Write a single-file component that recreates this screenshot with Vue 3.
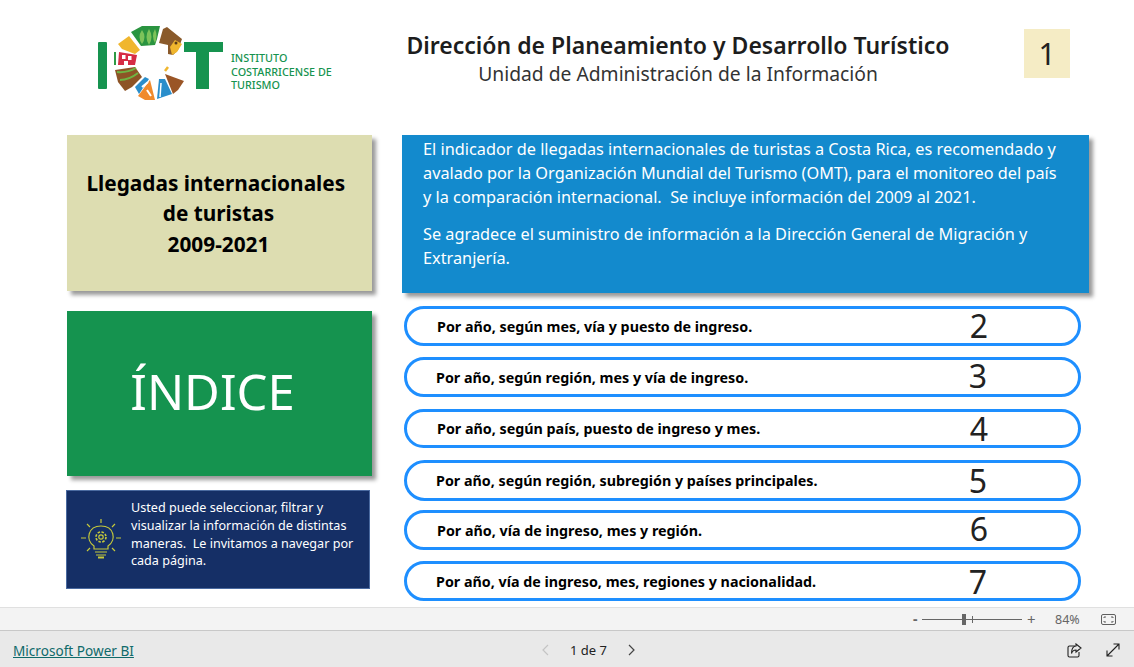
<script setup>
const links = [
  { text: 'Por año, según mes, vía y puesto de ingreso.', page: 2 },
  { text: 'Por año, según región, mes y vía de ingreso.', page: 3 },
  { text: 'Por año, según país, puesto de ingreso y mes.', page: 4 },
  { text: 'Por año, según región, subregión y países principales.', page: 5 },
  { text: 'Por año, vía de ingreso, mes y región.', page: 6 },
  { text: 'Por año, vía de ingreso, mes, regiones y nacionalidad.', page: 7 },
]

// pieces of the logo ring
const shapes = [
  { points: '33,7 44,1 62,1 59,14 57,20 43,21', fill: '#2a9440' },
  { points: '65,4 69,2 84,14 80,25 75,30 70,29 70,20 61,18', fill: '#8a5a2b' },
  { points: '72,22 77,15 84,19 79,27 74,30', fill: '#f0b62e' },
  { points: '20,19 31,11 42,25 37,29 24,24', fill: '#f0b62e' },
  { points: '21,27 39,30 37,40 20,40', fill: '#d62c45' },
  { points: '17,45 37,42 44,52 34,62 27,66 20,57', fill: '#8d5426' },
  { points: '37,62 47,52 51,54 41,69', fill: '#2a8ecb' },
  { points: '40,71 52,55 57,75 47,75', fill: '#f08a2c' },
  { points: '59,74 61,54 67,54 74,69', fill: '#2a8ecb' },
  { points: '67,49 86,56 80,65 75,69', fill: '#9a5526' },
]
</script>

<template>
  <div class="page">
    <div class="report">
      <header class="head">
        <div class="logo">
          <svg class="logo-mark" width="126" height="78" viewBox="0 0 126 78">
            <rect x="0" y="17" width="9" height="47" rx="1" fill="#16934f" />
            <rect x="86" y="17" width="39" height="10" fill="#16934f" />
            <rect x="98" y="17" width="13" height="47" fill="#16934f" />
            <polygon v-for="s in shapes" :key="s.points" :points="s.points" :fill="s.fill" stroke-linejoin="round" />
            <path d="M44 19 q-5 -7 0 -14 q5 7 0 14 M51 20 q-5 -8 0 -16 q5 8 0 16 M57 18 q-4 -7 0 -14 q3 7 0 14" fill="#7cc35a" />
            <circle cx="78" cy="18" r="1.500" fill="#5b3a16" />
            <path d="M17 27 v13" stroke="#2f9a45" stroke-width="2" />
            <rect x="24" y="30" width="3.500" height="4" fill="#fff" />
            <rect x="30" y="31" width="3.500" height="4" fill="#fff" />
            <rect x="26" y="36" width="4" height="4" fill="#fff" />
            <path d="M19 47 q10 1 19 -4 M22 55 q9 0 18 -7" fill="none" stroke="#6fb544" stroke-width="2" />
            <path d="M44 62 L50 57 M49 65 L53 71" stroke="#fff" stroke-width="2" />
            <path d="M63 58 L62 72" stroke="#fff" stroke-width="1.500" />
            <path d="M67 46 L70 42" stroke="#f0b62e" stroke-width="2.500" />
          </svg>
          <div class="logo-text">INSTITUTO<br />COSTARRICENSE DE<br />TURISMO</div>
        </div>
        <div class="titles">
          <h1>Dirección de Planeamiento y Desarrollo Turístico</h1>
          <p>Unidad de Administración de la Información</p>
        </div>
        <div class="tile">1</div>
      </header>

      <div class="body">
        <aside class="left">
          <div class="card khaki">Llegadas internacionales&nbsp;<br />de turistas<br />2009-2021</div>
          <div class="card green">ÍNDICE</div>
          <div class="navy">
            <svg width="40" height="42" viewBox="0 0 40 42" fill="none" stroke="#c6c93a" stroke-width="1.2">
              <path d="M13 30 v-3 c-9 -6 -6 -20 7 -20 c13 0 16 14 7 20 v3 Z" />
              <circle cx="20" cy="18" r="2.2" />
              <circle cx="20" cy="18" r="5" stroke-dasharray="2.5 1.4" stroke-width="1.6" />
              <path d="M20 0 v4 M6 5 l3 3 M34 5 l-3 3 M0 19 h5 M35 19 h5 M6 32 l3 -3 M34 32 l-3 -3 M14 33 h12 M15 36 h10" />
              <path d="M17 38.5 h6" stroke-width="2" />
            </svg>
            <p>Usted puede seleccionar, filtrar y visualizar la información de distintas maneras.&nbsp; Le invitamos a navegar por cada página.</p>
          </div>
        </aside>

        <main class="right">
          <div class="blue">
            <p>El indicador de llegadas internacionales de turistas a Costa Rica, es recomendado y avalado por la Organización Mundial del Turismo (OMT), para el monitoreo del país y la comparación internacional.&nbsp; Se incluye información del 2009 al 2021.</p>
            <p>Se agradece el suministro de información a la Dirección General de Migración y Extranjería.</p>
          </div>
          <div class="pills">
            <div v-for="l in links" :key="l.page" class="pill">
              <span class="pill-text">{{ l.text }}</span>
              <span class="pill-num">{{ l.page }}</span>
            </div>
          </div>
        </main>
      </div>
    </div>

    <div class="zoombar">
      <span class="zoom-sign">-</span>
      <div class="slider"><i class="thumb"></i><i class="tick"></i></div>
      <span class="zoom-sign plus">+</span>
      <span class="zoom-val">84%</span>
      <svg width="15" height="11" viewBox="0 0 15 11" fill="none" stroke="#5f5f5f">
        <rect x="0.5" y="0.5" width="14" height="10" rx="1.5" />
        <path d="M3 4 V3 H5 M10 3 H12 V4 M3 7 V8 H5 M10 8 H12 V7" />
      </svg>
    </div>

    <footer class="foot">
      <a class="brand">Microsoft Power BI</a>
      <div class="pager">
        <svg width="9" height="12" viewBox="0 0 9 12" fill="none" stroke="#c4c4c4" stroke-width="1.2"><path d="M7 1 L2 6 L7 11" /></svg>
        <span>1 de 7</span>
        <svg width="9" height="12" viewBox="0 0 9 12" fill="none" stroke="#444" stroke-width="1.2"><path d="M2 1 L7 6 L2 11" /></svg>
      </div>
      <div class="foot-icons">
        <svg width="15" height="15" viewBox="0 0 15 15" fill="none" stroke="#222" stroke-width="1.1">
          <path d="M8 3 H2.5 Q1 3 1 4.5 V12.5 Q1 14 2.5 14 H10.5 Q12 14 12 12.5 V9" />
          <path d="M9 1 L14 5 L9 9 V7 Q5.500 7 4.500 10.500 Q4.500 3.500 9 3 Z" />
        </svg>
        <svg width="14" height="14" viewBox="0 0 14 14" fill="none" stroke="#222" stroke-width="1.1">
          <path d="M1 13 L13 1 M7.500 1 H13 V6.500 M1 7.500 V13 H6.500" />
        </svg>
      </div>
    </footer>
  </div>
</template>

<style scoped>
.page {
  width: 1134px;
  height: 667px;
  display: flex;
  flex-direction: column;
  overflow: hidden;
  font-family: "Noto Sans", "Open Sans", "Liberation Sans", sans-serif;
  background: #fff;
}

.report {
  height: 607px;
  flex: none;
}

.head {
  height: 135px;
  display: flex;
  align-items: flex-start;
}

.logo {
  width: 300px;
  margin-left: 98px;
  padding-top: 25px;
  display: flex;
  align-items: flex-start;
  flex: none;
}

.logo-mark {
  flex: none;
}

.logo-text {
  margin: 26px 0 0 7px;
  font-size: 10.8px;
  line-height: 13.5px;
  font-weight: 500;
  color: #16934f;
  white-space: nowrap;
}

.titles {
  width: 560px;
  padding-top: 30px;
  text-align: center;
}

.titles h1 {
  margin: 0;
  font-size: 23px;
  line-height: 30px;
  font-weight: 600;
  color: #1d1d1d;
  white-space: nowrap;
}

.titles p {
  margin: 0;
  font-size: 19.3px;
  line-height: 28px;
  color: #333;
  white-space: nowrap;
}

.tile {
  width: 46px;
  height: 49px;
  margin: 29px 0 0 66px;
  background: #f5ecc5;
  color: #222;
  font-size: 30px;
  line-height: 49px;
  text-align: center;
}

.body {
  display: flex;
  padding-left: 66px;
}

.left {
  width: 306px;
  flex: none;
}

.card {
  width: 305px;
  box-sizing: border-box;
  margin-left: 1px;
  box-shadow: 4px 4px 4px rgba(0, 0, 0, 0.4);
  display: flex;
  align-items: center;
  justify-content: center;
  text-align: center;
}

.khaki {
  height: 156px;
  padding: 1px 2px 0 0;
  background: #ddddb1;
  color: #000;
  font-size: 20.8px;
  line-height: 30.5px;
  font-weight: 700;
}

.green {
  height: 165px;
  margin-top: 20px;
  padding: 0 14px 6px 0;
  background: #15934f;
  color: #fff;
  font-size: 49px;
}

.navy {
  width: 304px;
  height: 99px;
  box-sizing: border-box;
  margin-top: 14px;
  padding-left: 14px;
  display: flex;
  align-items: center;
  gap: 10px;
  background: #152f66;
  border: 1px solid #4a6aa0;
}

.navy p {
  margin: 0 0 10px;
  width: 228px;
  color: #fff;
  font-size: 12.6px;
  line-height: 17.7px;
}

.right {
  margin-left: 30px;
  width: 687px;
}

.blue {
  height: 158px;
  box-sizing: border-box;
  padding: 2px 24px 0 21px;
  background: #138acd;
  color: #fff;
  font-size: 16.3px;
  line-height: 24px;
  box-shadow: 4px 4px 4px rgba(0, 0, 0, 0.4);
}

.blue p {
  margin: 0 0 13px;
}

.pills {
  margin: 13px 0 0 2px;
  display: flex;
  flex-direction: column;
  gap: 11px;
}

.pill {
  width: 677px;
  height: 40px;
  box-sizing: border-box;
  border: 3px solid #1e8fff;
  border-radius: 21px;
  padding-left: 30px;
  display: flex;
  align-items: center;
  background: #fff;
}

.pill:nth-child(even) {
  padding-left: 29px;
}

.pill:nth-child(3) {
  height: 39px;
  margin-top: 1px;
}

.pill:nth-child(4) {
  height: 41px;
  margin-top: 1px;
}

.pill:nth-child(5) {
  margin-top: -2px;
}

.pill:nth-child(n + 5) {
  padding-top: 1px;
}

.pill:nth-child(2) .pill-num,
.pill:nth-child(5) .pill-num {
  margin-top: -3px;
}

.pill-text {
  width: 524px;
  flex: none;
  font-size: 14.3px;
  font-weight: 700;
  color: #000;
  white-space: nowrap;
}

.pill-num {
  width: 36px;
  text-align: center;
  font-size: 32px;
  line-height: 34px;
  color: #222;
}

.zoombar {
  height: 23px;
  flex: none;
  box-sizing: border-box;
  border-top: 1px solid #e0e0e0;
  background: #f3f3f3;
  display: flex;
  align-items: center;
  padding-left: 913px;
  color: #666;
}

.zoom-sign {
  width: 6px;
  font-size: 14px;
  font-weight: 700;
  line-height: 20px;
}

.zoom-sign.plus {
  width: 10px;
  margin-left: 5px;
  font-weight: 400;
  font-size: 15px;
}

.slider {
  position: relative;
  width: 100px;
  height: 1px;
  margin-left: 3px;
  background: #666;
}

.thumb {
  position: absolute;
  left: 40px;
  top: -5px;
  width: 4px;
  height: 11px;
  background: #666;
}

.tick {
  position: absolute;
  left: 50px;
  top: -3px;
  width: 1px;
  height: 7px;
  background: #666;
}

.zoom-val {
  margin-left: 18px;
  width: 46px;
  font-size: 12.5px;
}

.foot {
  flex: 1;
  box-sizing: border-box;
  border-top: 1px solid #c8c8c8;
  background: #e9e9e9;
  display: flex;
  align-items: center;
  padding: 2px 0 0 13px;
}

.brand {
  width: 528px;
  font-size: 13.6px;
  color: #0f6a6a;
  text-decoration: underline;
  white-space: nowrap;
}

.pager {
  display: flex;
  align-items: center;
  width: 98px;
  gap: 20px;
  font-size: 13px;
  color: #222;
}

.foot-icons {
  margin-left: 428px;
  display: flex;
  align-items: center;
  gap: 24px;
}
</style>
